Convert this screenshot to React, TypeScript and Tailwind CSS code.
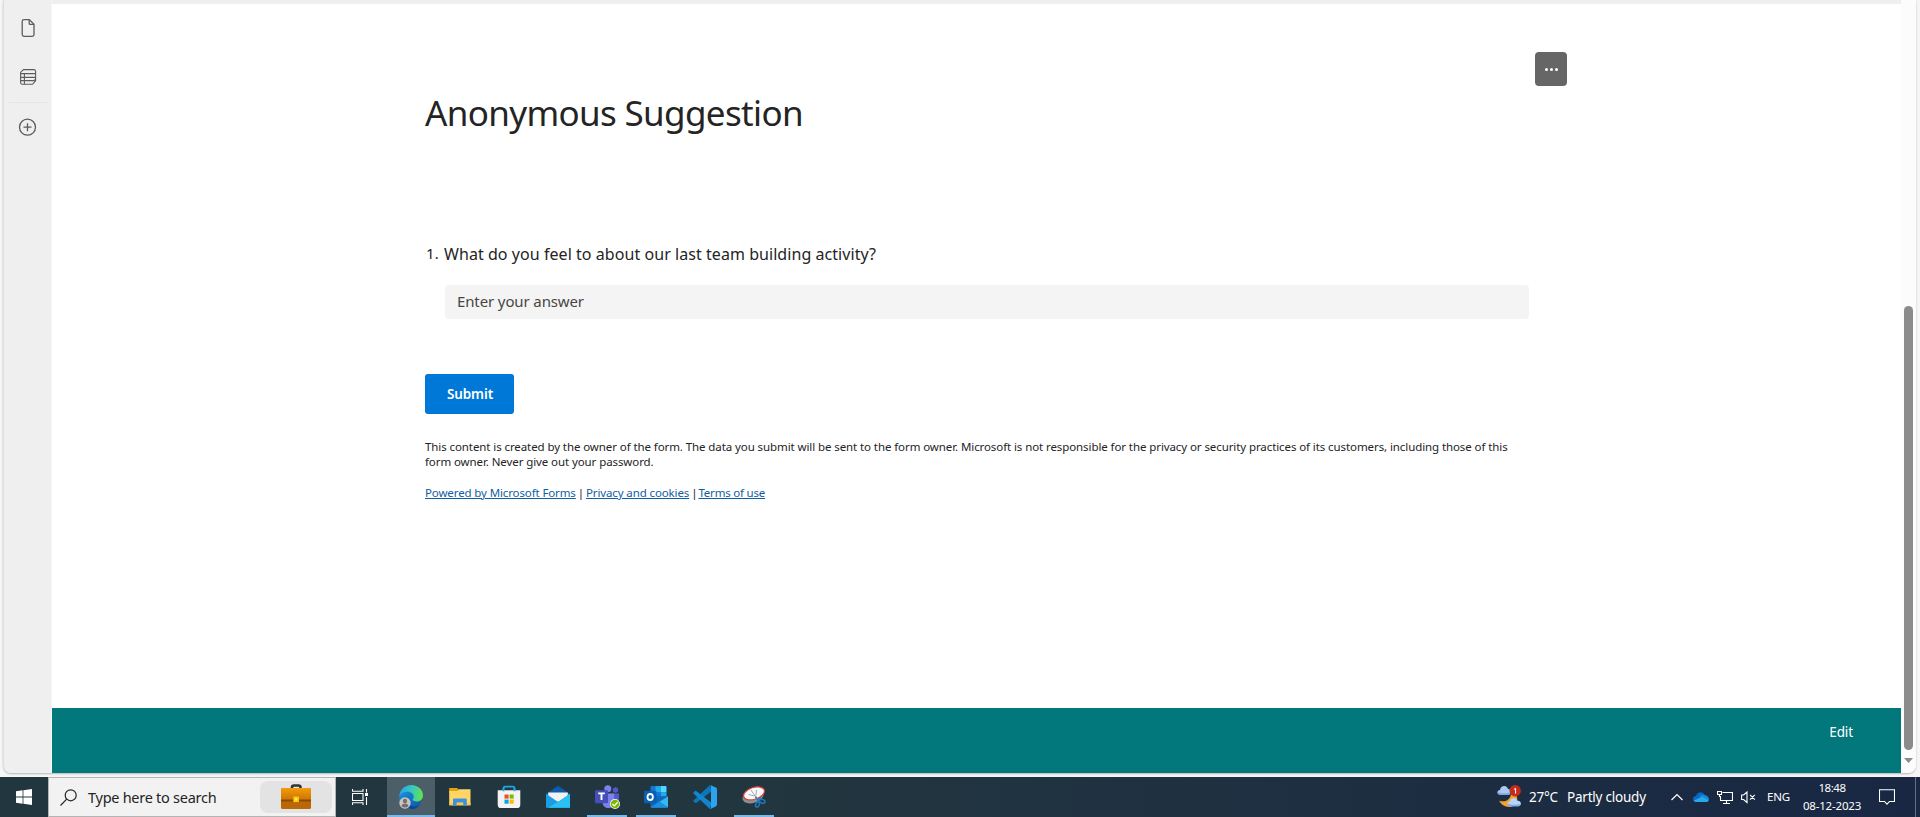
import type { ReactNode } from "react";

function Sidebar() {
  return (
    <aside className="flex w-12 shrink-0 flex-col items-center rounded-bl-lg border-l border-[#dedede] bg-[#efefef] text-[#5c5c5c]">
      <svg className="mt-[18px] h-5 w-5" viewBox="0 0 20 20" fill="none" stroke="currentColor" strokeWidth="1.3">
        <path d="M6 1.6h5.3L16 6.3v10.2a1.8 1.8 0 0 1-1.8 1.8H6a1.8 1.8 0 0 1-1.8-1.8V3.4A1.8 1.8 0 0 1 6 1.6Z" />
        <path d="M11.2 1.8v3.4c0 .7.5 1.2 1.2 1.2h3.4" />
      </svg>
      <svg className="mt-[29px] h-5 w-5" viewBox="0 0 20 20" fill="none" stroke="currentColor" strokeWidth="1.1">
        <path d="M5.4 2.6h10.4a1.8 1.8 0 0 1 1.8 1.8v9.3l-3.1 3.6H4.4a1.8 1.8 0 0 1-1.8-1.8V5.4Z" />
        <path d="M2.6 6.6h15M2.6 10.4h15M2.6 13.6h12.5a2.4 2.4 0 0 0 2.4-1.6M6.4 6.6v10.7" />
      </svg>
      <div className="mt-[15px] h-px w-[38px] bg-[#e5e5e5]" />
      <svg className="mt-[14px] h-5 w-5" viewBox="0 0 20 20" fill="none" stroke="currentColor" strokeWidth="1.3">
        <circle cx="9.5" cy="10.2" r="8" />
        <path d="M9.5 6.200v8M5.500 10.200h8" />
      </svg>
    </aside>
  );
}

function FormPage() {
  return (
    <main className="flex h-[704px] flex-col bg-white pr-[334px] pl-[373px] text-[#242424]">
      <div className="mt-12 flex h-[34px] justify-end">
        <button className="flex w-8 items-center justify-center gap-[2px] rounded bg-[#666666]">
          <span className="size-[3px] rounded-full bg-white" />
          <span className="size-[3px] rounded-full bg-white" />
          <span className="size-[3px] rounded-full bg-white" />
        </button>
      </div>
      <h1 className="mt-[5px] text-[35px] leading-[44px] tracking-[-0.65px]">Anonymous Suggestion</h1>
      <div className="mt-[107px] flex text-[16px] leading-6 tracking-[0.055px]">
        <span className="-mt-px ml-px w-[18px] text-[15px]">1.</span>
        <span>What do you feel to about our last team building activity?</span>
      </div>
      <div className="mt-[19px] mr-[38px] ml-5 flex h-[34px] items-center rounded bg-[#f4f4f4] pb-px pl-3 text-[15px] tracking-[-0.12px] text-[#484644]">
        Enter your answer
      </div>
      <button className="mt-[55px] h-10 w-[89px] rounded-[3px] bg-[#0078d7] pl-px text-[13.5px] font-semibold tracking-[-0.1px] text-white">
        Submit
      </button>
      <p className="mt-[25px] mr-9 text-[11.5px] leading-[15px] tracking-[-0.09px]">
        This content is created by the owner of the form. The data you submit will be sent to the form owner. Microsoft is
        not responsible for the privacy or security practices of its customers, including those of this
        <br />
        form owner. Never give out your password.
      </p>
      <p className="mt-4 flex gap-[2px] text-[11.5px] leading-[15px] tracking-[-0.12px]">
        <a className="text-[#115ea3] underline underline-offset-1">Powered by Microsoft Forms</a>
        <span>|</span>
        <a className="text-[#115ea3] underline underline-offset-1">Privacy and cookies</a>
        <span>|</span>
        <a className="-ml-px tracking-[-0.2px] text-[#115ea3] underline underline-offset-1">Terms of use</a>
      </p>
    </main>
  );
}

function Scrollbar() {
  return (
    <div className="flex w-[15px] shrink-0 flex-col items-center rounded-br-lg bg-[#fcfcfc] pt-[306px]">
      <div className="h-[444px] w-[9px] rounded-full bg-[#8b8b8b]" />
      <svg className="mt-2 h-[5px] w-[9px]" viewBox="0 0 9 5">
        <path d="M0 0h9L4.5 5Z" fill="#8b8b8b" />
      </svg>
    </div>
  );
}

const EdgeIcon = () => (
  <svg className="size-6" viewBox="0 0 24 24">
    <defs>
      <linearGradient id="edgeTop" x1="0" y1="0.5" x2="1" y2="0.6">
        <stop offset="0" stopColor="#2aa5e8" />
        <stop offset="0.5" stopColor="#36c9c0" />
        <stop offset="1" stopColor="#66e04e" />
      </linearGradient>
      <linearGradient id="edgeLow" x1="0" y1="0" x2="1" y2="1">
        <stop offset="0" stopColor="#1a93dd" />
        <stop offset="1" stopColor="#0c4fa6" />
      </linearGradient>
    </defs>
    <path d="M.2 12.5C.8 7.500 5 6.600 8.500 6.700c4 .1 6.500 2.500 6.500 5.300 0 1.200-1 1.900-1 2.600 0 .9 1.500 1.900 4 1.900 1.500 0 3-.5 4.500-1.700C21.500 19.500 17.500 24 12 24 5.500 24-.3 19 .2 12.500Z" fill="url(#edgeLow)" />
    <path d="M8.400 10.500c-2 2.500-1.600 8.500 5.100 10.700 3 .9 6.500 0 8.300-2.800C20 21.800 16.500 24 12.500 24 7 23 4.500 16 8.400 10.500Z" fill="#0e4594" />
    <path d="M.2 11.500C.6 5 5.800 0 12 0c7.500 0 12 5.300 12 10.200 0 4-2.800 6.300-6.200 6.300-2.800 0-4.200-1-4.200-1.900 0-.7 1.100-1.200 1.100-2.900 0-2.400-2.400-4.900-6.200-4.900C4.500 6.800 1.500 8.500.2 11.500Z" fill="url(#edgeTop)" />
    <circle cx="6" cy="18" r="5.700" fill="#c9c5c2" />
    <circle cx="6" cy="16" r="2.200" fill="#76706c" />
    <path d="M2.600 21.300c0-2 1.400-2.900 3.400-2.900s3.400.9 3.400 2.900c-1.900 1.700-4.900 1.700-6.800 0Z" fill="#76706c" />
  </svg>
);

const ExplorerIcon = () => (
  <svg className="h-6 w-6" viewBox="0 0 24 24">
    <path d="M1.200 3h8l1.600 1.800v3H1.200Z" fill="#e8a30c" />
    <path d="M1.200 6h8.400l1.400-1.700h11.500V20H1.200Z" fill="#ffd566" />
    <path d="M1.200 18h21.300v2.500H1.200Z" fill="#f8c64c" />
    <path d="M5 21v-6.200c0-.9.500-1.400 1.400-1.400h11c.9 0 1.400.5 1.400 1.400V21h-3.600v-3.600H8.600V21Z" fill="#3b92dc" />
  </svg>
);

const StoreIcon = () => (
  <svg className="h-6 w-6" viewBox="0 0 24 24">
    <path d="M6.500 6.500V3.200c0-1 .6-1.600 1.600-1.600h7.800c1 0 1.600.6 1.600 1.600v3.300" fill="none" stroke="#1ca7e8" strokeWidth="1.800" />
    <path d="M.7 5.300h22.600v14.400a3.400 3.400 0 0 1-3.400 3.400H4.100a3.400 3.400 0 0 1-3.400-3.400Z" fill="#f3f3f3" />
    <path d="M6.500 6.300V3.200M17.500 6.300V3.200" stroke="#1ca7e8" strokeWidth="1.800" />
    <path d="M7.500 9.500h4.100v4.100H7.500Z" fill="#f25022" />
    <path d="M12.600 9.500h4.100v4.100h-4.100Z" fill="#7fba00" />
    <path d="M7.500 14.600h4.100v4.100H7.500Z" fill="#00a4ef" />
    <path d="M12.600 14.600h4.100v4.100h-4.100Z" fill="#ffb900" />
  </svg>
);

const MailIcon = () => (
  <svg className="h-6 w-6" viewBox="0 0 24 24">
    <path d="M0 9 12 .8 24 9v4H0Z" fill="#0d5cab" />
    <path d="M2.200 7.600h19.600v5L12 17l-9.800-4Z" fill="#f2f2f2" />
    <path d="M0 8.800 12 17l12-8.200v14H0Z" fill="#1b9de6" />
    <path d="M24 8.800v14H2l12-7.100Z" fill="#2bc0f5" />
  </svg>
);

const TeamsIcon = () => (
  <svg className="h-6 w-[25px]" viewBox="0 0 25 24">
    <circle cx="20.500" cy="5" r="2.700" fill="#5059c9" />
    <path d="M16 8.600h8V15c0 3-2 4.600-5 4.600Z" fill="#5059c9" />
    <circle cx="12.800" cy="3.700" r="3.500" fill="#7b83eb" />
    <path d="M7.500 8.600h11.700v8c0 4-2.500 6.500-6 6.500s-5.700-2.500-5.700-6Z" fill="#7b83eb" />
    <rect x="0" y="5.200" width="13" height="13" rx="1" fill="#464eb8" />
    <path d="M3.200 8.400h6.600M6.500 8.400V15" stroke="#fff" strokeWidth="1.900" />
    <circle cx="20" cy="19" r="5" fill="#fff" />
    <circle cx="20" cy="19" r="4.300" fill="#7db800" />
    <path d="m17.500 19 1.800 1.900 3.300-3.700" fill="none" stroke="#fff" strokeWidth="1.300" />
  </svg>
);

const OutlookIcon = () => (
  <svg className="h-6 w-6" viewBox="0 0 24 24">
    <path d="M6.500 2.300c0-.7.500-1.200 1.200-1.200h13.500c.7 0 1.200.5 1.200 1.200v13H6.500Z" fill="#0f78d4" />
    <path d="M11.500 1.100h5.500v6h-5.500Z" fill="#28a8ea" />
    <path d="M17 1.100h4.200c.7 0 1.200.5 1.200 1.200v4.800H17Z" fill="#50d9ff" />
    <path d="M17 7.100h5.400v6H17Z" fill="#28a8ea" />
    <path d="M6.500 11.500 24 11v10.500c0 .8-.5 1.300-1.300 1.300H7.800c-.8 0-1.300-.5-1.300-1.300Z" fill="#1167b8" />
    <path d="m24 11.500-9 5.500 8.700 5.300c.2-.2.300-.5.300-.8Z" fill="#35b8f1" />
    <path d="m6.700 22.300 9-6 7.800 6.200c-.2.200-.5.300-.8.300H7.800Z" fill="#1c90df" />
    <rect x="0" y="5.800" width="12.400" height="12.400" rx="1" fill="#0a5fb4" />
    <ellipse cx="6.200" cy="12" rx="2.700" ry="3" fill="none" stroke="#fff" strokeWidth="1.800" />
  </svg>
);

const CodeIcon = () => (
  <svg className="h-6 w-6" viewBox="0 0 24 24">
    <path d="M17 0 .7 15.200c-.5.400-.5 1 0 1.400l1.300 1.200c.4.300.9.300 1.200.1L18.500 6.300Z" fill="#0a77bd" />
    <path d="M17 24 .7 8.700c-.5-.4-.5-1 0-1.400L2 6.100c.4-.3.9-.3 1.200-.1l15.300 11.700Z" fill="#1186cf" />
    <path d="M17.200 23.900c-.6 0-.9-.2-1.200-.5.700.7 2 .2 2-.8V1.400c0-1-1.300-1.500-2-.8.500-.5 1.100-.7 1.800-.4l5 2.400c.7.300 1.200 1 1.200 1.800v15.200c0 .8-.5 1.500-1.200 1.800l-5 2.400c-.2.100-.4.100-.6.100Z" fill="#2ca3ee" />
  </svg>
);

const SnipIcon = () => (
  <svg className="h-6 w-6" viewBox="0 0 24 24">
    <ellipse cx="11" cy="11.500" rx="10.800" ry="6.300" transform="rotate(-18 11 11.500)" fill="#8c9094" />
    <ellipse cx="12" cy="8.400" rx="10.800" ry="5.900" transform="rotate(-18 12 8.400)" fill="#fafafa" stroke="#d8413c" strokeWidth="1.200" />
    <path d="m9 5 6 9M14.500 5l-1 9M6.500 9.500l6 1.500" stroke="#8c9499" strokeWidth="0.800" />
    <path d="m13.500 12 3.800 4.200M19 12.500l-3.500 4" stroke="#2b83bd" strokeWidth="1.800" />
    <ellipse cx="15.500" cy="19.500" rx="1.800" ry="2.700" transform="rotate(18 15.500 19.500)" fill="none" stroke="#1b77b8" strokeWidth="1.600" />
    <ellipse cx="20.200" cy="16.300" rx="2.800" ry="1.800" transform="rotate(20 20.200 16.300)" fill="none" stroke="#1b77b8" strokeWidth="1.600" />
  </svg>
);

const WeatherIcon = () => (
  <svg className="h-6 w-6" viewBox="0 0 24 24">
    <path d="M13.500 6.500c2 7-4.500 11.500-11.300 9.300 3 6.500 12 8.200 16.300 3.200 3.800-4.500 1.500-11-5-12.500Z" fill="#f4a12b" />
    <path d="M3 9.800C-.5 9.500-.3 5 3 5c.5-5 7-5.500 8-1 3.500-.2 4 5.500.5 5.800Z" fill="#a9c8f3" />
    <path d="M3 9.800C.9 9.600.1 8 .5 6.700c3 1.800 8 2 12.800.8-.3 1.300-1 2.200-1.800 2.300Z" fill="#7ea9e6" />
    <path d="M13 21.300c-3.500-.3-3.300-4.800-.2-4.800.7-4.500 6.500-4.500 7.700-.7 4-.5 4.600 5 1 5.500Z" fill="#b8d3f8" />
    <path d="M13 21.300c-2-.2-2.800-1.500-2.400-2.800 3.500 1.500 9 1.700 13.200.6-.3 1.200-1.100 2.100-2.300 2.200Z" fill="#82abe8" />
    <circle cx="18.200" cy="5.800" r="5.700" fill="#c42b1c" />
    <path d="m16.900 4.500 1.700-1.200v5.300" fill="none" stroke="#fff" strokeWidth="1" />
  </svg>
);

const Briefcase = () => (
  <svg className="h-[26px] w-[30px]" viewBox="0 0 30 26">
    <defs>
      <linearGradient id="leather" x1="0" y1="0" x2="0" y2="1">
        <stop offset="0" stopColor="#f59b0b" />
        <stop offset="1" stopColor="#cc7404" />
      </linearGradient>
    </defs>
    <path d="M11 5V3.500C11 2.300 11.800 1.500 13 1.500h4.500c1.200 0 2 .8 2 2V5" fill="none" stroke="#333" strokeWidth="2.600" />
    <rect y="4" width="30" height="21" rx="1.500" fill="#ba6806" />
    <path d="M0 16V5.500C0 4.700.7 4 1.500 4h27c.8 0 1.500.7 1.500 1.500V16Z" fill="url(#leather)" />
    <path d="M0 15.500h30v2H0Z" fill="#8d4a03" />
    <path d="M12.300 12.500h5.600v5.600h-5.600Z" fill="#f8c90e" />
    <path d="M14 14.300h2.300v2H14Z" fill="#fff06a" />
  </svg>
);

function TaskButton({ children, state = "idle" }: { children: ReactNode; state?: "idle" | "open" | "active" }) {
  return (
    <div className={state === "active" ? "flex w-12 flex-col items-center bg-[#4c5e67]" : "flex w-12 flex-col items-center"}>
      <div className="flex h-[38px] items-center pt-[2px]">{children}</div>
      {state === "active" && <div className="h-0.5 w-12 bg-[#76b9ed]" />}
      {state === "open" && <div className="h-0.5 w-10 bg-[#76b9ed]" />}
    </div>
  );
}

function Tray() {
  return (
    <div className="ml-auto flex items-center text-white">
      <WeatherIcon />
      <span className="mt-px ml-2 w-[38px] text-[13.5px] tracking-[-0.2px]">27°C</span>
      <span className="mt-px w-[79px] text-[13.5px] tracking-[-0.22px] whitespace-nowrap">Partly cloudy</span>
      <svg className="ml-[25px] h-3 w-3" viewBox="0 0 12 12" fill="none" stroke="currentColor" strokeWidth="1.200">
        <path d="m.5 9 5.500-5.500L11.500 9" />
      </svg>
      <svg className="ml-[10px] h-4 w-4" viewBox="0 0 16 16">
        <path d="M3.200 13C.8 13-.2 11 .1 9.300.5 7.700 1.800 6.900 3 6.900 4 3 9.600 1.300 12 6.200L9 11Z" fill="#0a68c4" />
        <path d="M6.500 6.700c2-1 3.500-.8 5.500-.5 2 0 4 1.800 4 4 0 1.800-1.400 2.800-3 2.800Z" fill="#1689dc" />
        <path d="m.8 11.500 7-3.300c1.200-.5 2-.2 3 .3l4.700 3c-.6 1-1.500 1.500-2.500 1.500H3.200c-1 0-1.900-.6-2.400-1.500Z" fill="#28a8ea" />
      </svg>
      <svg className="ml-2 h-4 w-4" viewBox="0 0 16 16" fill="none" stroke="currentColor" strokeWidth="1.100">
        <path d="M5.500 3.500h10v8h-12V7M9.500 11.500v3M6 14.500h7M.5 2.500h4v3h-4ZM2.500 5.500v2h1" />
      </svg>
      <svg className="ml-2 h-4 w-4" viewBox="0 0 16 16" fill="none" stroke="currentColor" strokeWidth="1.100">
        <path d="M.6 6v4.500h2L6 13.500V3L2.600 6ZM9 5.800l4.800 4.800M13.800 5.800 9 10.600" />
      </svg>
      <span className="ml-[10px] w-6 text-[11.5px] tracking-[-0.2px]">ENG</span>
      <div className="ml-[11px] flex w-[60px] flex-col items-center text-[11.5px] leading-[18px] tracking-[-0.2px]">
        <span className="tracking-[-0.45px]">18:48</span>
        <span>08-12-2023</span>
      </div>
      <svg className="ml-[17px] h-4 w-4" viewBox="0 0 16 16" fill="none" stroke="currentColor" strokeWidth="1.100">
        <path d="M.5.800h15v11.700h-5L8 15.200l-2.500-2.700h-5Z" />
      </svg>
      <div className="ml-5 h-10 w-px bg-[#66708a]" />
      <div className="w-1" />
    </div>
  );
}

function Taskbar() {
  return (
    <footer className="flex h-10 bg-linear-to-r from-[#21363f] via-[#22363f] via-40% to-[#192743]">
      <div className="flex w-12 items-center justify-center">
        <svg className="h-4 w-4" viewBox="0 0 16 16" fill="#fff">
          <path d="M0 2.200 6.600 1.300v6.300H0ZM7.400 1.200 16 0v7.600H7.400ZM0 8.400h6.600v6.300L0 13.800ZM7.400 8.400H16V16l-8.600-1.200Z" />
        </svg>
      </div>
      <div className="flex w-72 items-center border border-[#b4b4b4] bg-[#f2f2f2] pl-[11px] text-[#242424]">
        <svg className="h-[17px] w-[17px]" viewBox="0 0 17 17" fill="none" stroke="currentColor" strokeWidth="1.200">
          <circle cx="10.700" cy="6.300" r="5.500" />
          <path d="M6.700 10.200.5 16.500" />
        </svg>
        <span className="mt-0.5 ml-[11px] text-[14.500px] tracking-[-0.27px]">Type here to search</span>
        <div className="mr-[3px] ml-auto flex h-8 w-[72px] justify-center rounded-lg bg-[#e3e3e3] pt-[3px]">
          <Briefcase />
        </div>
      </div>
      <div className="flex w-[51px] items-center pl-4">
        <svg className="h-4 w-4" viewBox="0 0 16 16" fill="none" stroke="#fff" strokeWidth="1.100">
          <path d="M.5 4.500h10.500v7H.5ZM.5 0v2.200h10.500V0M.5 16v-2.200h10.500V16M14.500 0v3.500M14.500 8v8" />
          <path d="M13 4h3v3h-3Z" fill="#fff" stroke="none" />
        </svg>
      </div>
      <div className="flex gap-px">
        <TaskButton state="active"><EdgeIcon /></TaskButton>
        <TaskButton><ExplorerIcon /></TaskButton>
        <TaskButton><StoreIcon /></TaskButton>
        <TaskButton><MailIcon /></TaskButton>
        <TaskButton state="open"><TeamsIcon /></TaskButton>
        <TaskButton state="open"><OutlookIcon /></TaskButton>
        <TaskButton><CodeIcon /></TaskButton>
        <TaskButton state="open"><SnipIcon /></TaskButton>
      </div>
      <Tray />
    </footer>
  );
}

export default function App() {
  return (
    <div className="flex h-[817px] w-[1920px] flex-col overflow-hidden bg-[#f6f6f6] font-['Noto_Sans',sans-serif]">
      <div className="flex h-[777px] pr-1 pb-1 pl-[3px]">
        <div className="flex flex-1 rounded-b-lg shadow-[0_1px_2px_rgba(0,0,0,0.25)]">
          <Sidebar />
          <div className="ml-px flex flex-1 flex-col bg-[#efefef] pt-1">
            <FormPage />
            <div className="flex flex-1 justify-end bg-[#03787c] pt-[13px] pr-[48px] text-[13.500px] leading-[22px] text-white">
              <span className="tracking-[-0.1px]">Edit</span>
            </div>
          </div>
          <Scrollbar />
        </div>
      </div>
      <Taskbar />
    </div>
  );
}
